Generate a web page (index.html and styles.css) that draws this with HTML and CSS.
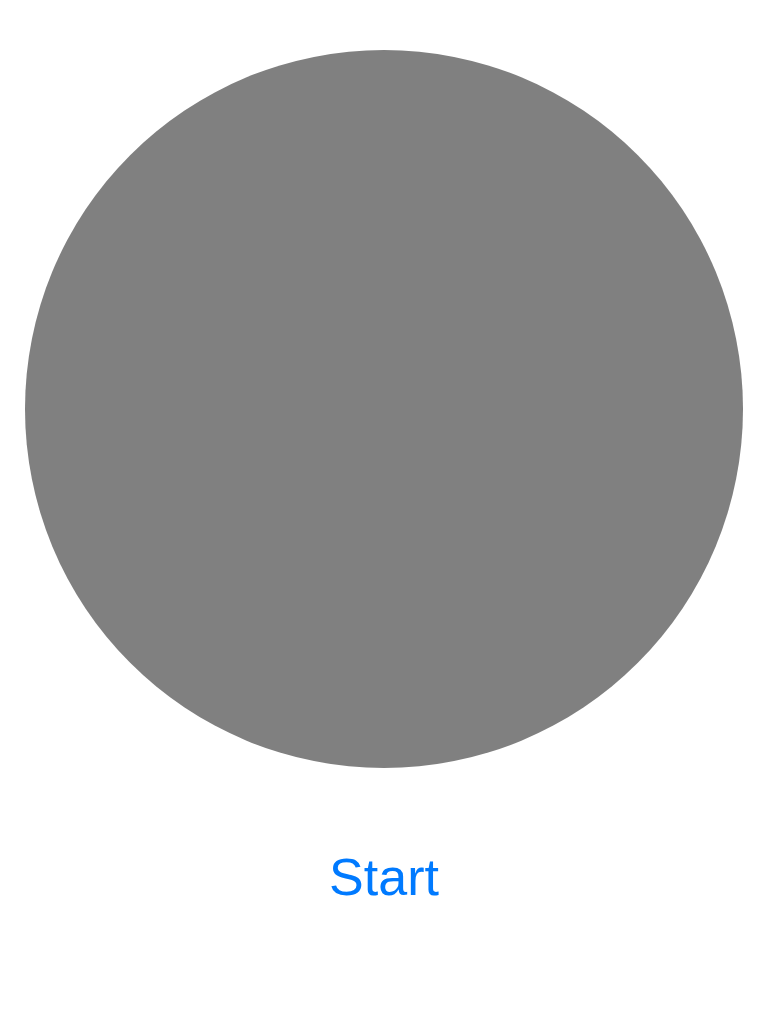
FILE: index.html
```html
<!DOCTYPE html>
<html>
<head>
<meta charset="utf-8">
<link rel="stylesheet" href="styles.css">
</head>
<body>
<main class="screen">
  <div class="circle"></div>
  <button class="start">Start</button>
</main>
</body>
</html>
```
FILE: styles.css
```css
html, body {
  margin: 0;
  padding: 0;
  background: #ffffff;
}
.screen {
  width: 768px;
  height: 1024px;
  display: flex;
  flex-direction: column;
  align-items: center;
  padding-top: 50px;
  box-sizing: border-box;
}
.circle {
  width: 718px;
  height: 718px;
  border-radius: 50%;
  background: #808080;
}
.start {
  margin-top: 79px;
  border: 0;
  background: none;
  padding: 0;
  font-family: "Liberation Sans", Arial, sans-serif;
  font-size: 52px;
  line-height: 60px;
  color: #007aff;
}
```
